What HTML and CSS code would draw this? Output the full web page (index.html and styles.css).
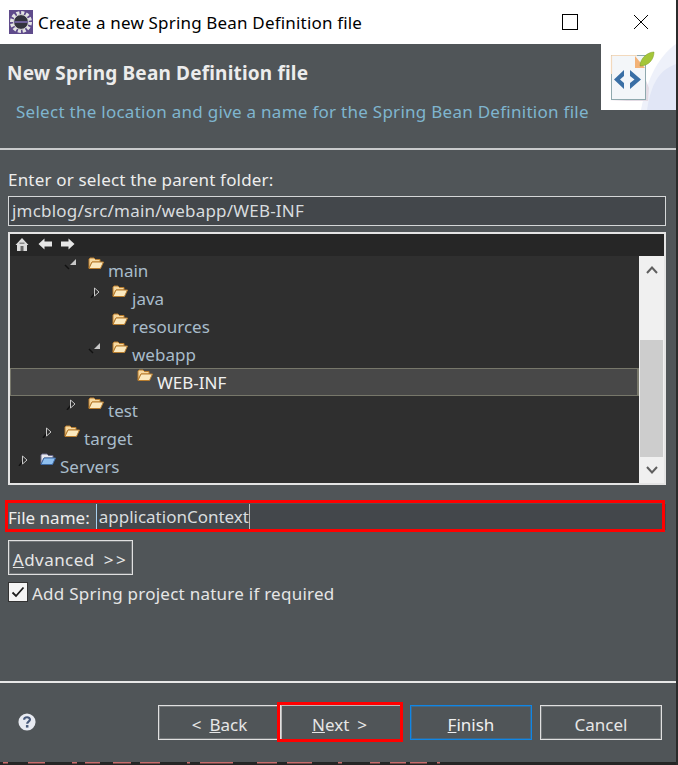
FILE: index.html
```html
<!DOCTYPE html>
<html lang="en">
<head>
    <meta charset="UTF-8">
    <title>Create a new Spring Bean Definition file</title>
    <link rel="stylesheet" href="styles.css">
</head>
<body>
<svg class="defs" width="0" height="0">
    <defs>
        <g id="open-folder">
            <path d="M1 11 V2 L2 1 H6 L7.500 2.500 H12 V5 H4 L1 11 Z" fill="#f7d9a0" stroke="#b87d2e"/>
            <path d="M1 11.500 L4 5 H15.500 L12.500 11.500 Z" fill="#fbe9bf" stroke="#b87d2e"/>
        </g>
        <g id="project-folder">
            <path d="M1 11 V2 L2 1 H7 L8.500 2.500 H13 V5 H4 L1 11 Z" fill="#e8e8ee" stroke="#6a6a8a"/>
            <path d="M1 11.500 L4 5 H15.500 L12.500 11.500 Z" fill="#8fc0f0" stroke="#3f6aa5"/>
        </g>
        <g id="twist-open">
            <path d="M1 9 L5 13" stroke="#111" stroke-width="1.500"/>
            <path d="M12 3 V9 H6 Z" fill="#c8c8c8"/>
        </g>
        <g id="twist-closed">
            <path d="M3 14 L7 9" stroke="#111" stroke-width="1.500"/>
            <path d="M6.500 4 L11 8 L6.500 12 Z" fill="#2c2c2c" stroke="#c8c8c8"/>
        </g>
    </defs>
</svg>
<div class="window">
    <div class="titlebar">
        <svg class="app-icon" width="24" height="24" viewBox="0 0 24 24">
            <rect width="24" height="24" fill="#5f4b8b"/>
            <circle cx="12" cy="12" r="9" fill="none" stroke="#e4e4e4" stroke-width="4" stroke-dasharray="3 1.7"/>
            <circle cx="12" cy="12" r="7.4" fill="#33333d" stroke="#d8d8d8"/>
            <rect x="5" y="11" width="14" height="2" fill="#6d5f97"/>
        </svg>
        <span class="title-text">Create a new Spring Bean Definition file</span>
        <div class="win-buttons">
            <svg width="16" height="16" viewBox="0 0 16 16"><rect x="0.500" y="0.500" width="15" height="15" fill="none" stroke="#000" stroke-width="1"/></svg>
            <svg width="16" height="16" viewBox="0 0 16 16"><path d="M1 1 L15 15 M15 1 L1 15" stroke="#000" stroke-width="1" fill="none"/></svg>
        </div>
    </div>

    <div class="banner">
        <div class="banner-text">
            <h1>New Spring Bean Definition file</h1>
            <p>Select the location and give a name for the Spring Bean Definition file</p>
        </div>
        <div class="banner-image">
            <svg width="75" height="66" viewBox="0 0 75 66">
                <path d="M40 66 C46 34 58 12 75 0 V66 Z" fill="#eef1fa"/>
                <path d="M46 66 C50 40 58 26 75 20 V66 Z" fill="#e1e6f6"/>
                <path d="M8 57 H47 L48 44 L44 34 V55 Z" fill="#e3dbe4"/>
                <rect x="10.500" y="11.500" width="34" height="44" fill="#f3f6f9" stroke="#8fa9ae"/>
                <path d="M10.500 11.500 H36 M10.500 11.500 V30" stroke="#f2d9bd" stroke-width="1.200" fill="none"/>
                <path d="M23 26 L13 35.500 L23 45 V39 L19 35.500 L23 32 Z" fill="#3a6fa5"/>
                <path d="M29 26 L40 35.500 L29 45 V39 L33.500 35.500 L29 32 Z" fill="#3a6fa5"/>
                <path d="M34 12 L44 24 L34 24 Z" fill="#f2b277"/>
                <path d="M39 22 C39 14 47 8 53 8 C53 15 48 22 39 22 Z" fill="#a4c639" stroke="#7c9b26" stroke-width="0.500"/>
            </svg>
        </div>
    </div>

    <div class="content">
        <label class="field-label">Enter or select the parent folder:</label>
        <div class="text-input">jmcblog/src/main/webapp/WEB-INF</div>

        <div class="tree-box">
            <div class="tree-toolbar">
                <svg width="14" height="15" viewBox="0 0 14 15"><path d="M7 1 L13.500 8 L12 8 V14 H2 V8 H0.500 Z" fill="#dcdcdc"/><rect x="5.500" y="9" width="3" height="5" fill="#666"/><rect x="4.500" y="5.500" width="5" height="1.500" fill="#888"/></svg>
                <svg width="14" height="12" viewBox="0 0 14 12"><path d="M0.500 6 L6.500 0.500 V3.500 H14 V8.500 H6.500 V11.500 Z" fill="#e6e6e6"/></svg>
                <svg width="14" height="12" viewBox="0 0 14 12"><path d="M13.500 6 L7.500 0.500 V3.500 H0 V8.500 H7.500 V11.500 Z" fill="#e6e6e6"/></svg>
            </div>
            <div class="tree-body">
                <ul class="tree">
                    <li class="row depth-3"><svg class="twist" width="14" height="14" viewBox="0 0 14 14"><use href="#twist-open"/></svg><svg class="folder" width="16" height="12" viewBox="0 0 16 12"><use href="#open-folder"/></svg><span>main</span></li>
                    <li class="row depth-4"><svg class="twist" width="14" height="14" viewBox="0 0 14 14"><use href="#twist-closed"/></svg><svg class="folder" width="16" height="12" viewBox="0 0 16 12"><use href="#open-folder"/></svg><span>java</span></li>
                    <li class="row depth-4 no-kids"><svg class="folder" width="16" height="12" viewBox="0 0 16 12"><use href="#open-folder"/></svg><span>resources</span></li>
                    <li class="row depth-4"><svg class="twist" width="14" height="14" viewBox="0 0 14 14"><use href="#twist-open"/></svg><svg class="folder" width="16" height="12" viewBox="0 0 16 12"><use href="#open-folder"/></svg><span>webapp</span></li>
                    <li class="row depth-5 no-kids selected"><svg class="folder" width="16" height="12" viewBox="0 0 16 12"><use href="#open-folder"/></svg><span>WEB-INF</span></li>
                    <li class="row depth-3"><svg class="twist" width="14" height="14" viewBox="0 0 14 14"><use href="#twist-closed"/></svg><svg class="folder" width="16" height="12" viewBox="0 0 16 12"><use href="#open-folder"/></svg><span>test</span></li>
                    <li class="row depth-2"><svg class="twist" width="14" height="14" viewBox="0 0 14 14"><use href="#twist-closed"/></svg><svg class="folder" width="16" height="12" viewBox="0 0 16 12"><use href="#open-folder"/></svg><span>target</span></li>
                    <li class="row depth-1"><svg class="twist" width="14" height="14" viewBox="0 0 14 14"><use href="#twist-closed"/></svg><svg class="folder" width="16" height="12" viewBox="0 0 16 12"><use href="#project-folder"/></svg><span>Servers</span></li>
                </ul>
                <div class="scrollbar">
                    <div class="arrow arrow-up"><svg width="12" height="10" viewBox="0 0 12 10"><path d="M1 8 L6 2.500 L11 8" fill="none" stroke="#5f5f5f" stroke-width="2"/></svg></div>
                    <div class="track"><div class="thumb"></div></div>
                    <div class="arrow arrow-down"><svg width="12" height="10" viewBox="0 0 12 10"><path d="M1 2 L6 7.500 L11 2" fill="none" stroke="#5f5f5f" stroke-width="2"/></svg></div>
                </div>
            </div>
        </div>

        <div class="file-row">
            <label>File name:</label>
            <div class="file-input">applicationContext<span class="caret"></span></div>
        </div>

        <button class="btn btn-advanced"><u>A</u>dvanced<span class="more">&gt;&gt;</span></button>

        <div class="check-row">
            <span class="checkbox"><svg width="16" height="16" viewBox="0 0 16 16"><path d="M2.500 8.500 L6 12 L13.500 3.500" fill="none" stroke="#1c1c1c" stroke-width="1.800"/></svg></span>
            <span class="check-label">Add Spring project nature if required</span>
        </div>
    </div>

    <div class="footer">
        <svg class="help" width="18" height="18" viewBox="0 0 20 20">
            <circle cx="10" cy="10" r="9.500" fill="#e8ebf2"/>
            <path d="M6.800 7.500 C6.800 3.800 13.300 3.800 13.300 7.300 C13.300 9.800 10.200 9.600 10.200 12" fill="none" stroke="#47597a" stroke-width="2.400"/>
            <rect x="8.800" y="13.400" width="2.800" height="2.800" fill="#47597a"/>
        </svg>
        <div class="footer-buttons">
            <button class="btn btn-back"><span class="lt">&lt;</span><u>B</u>ack</button>
            <button class="btn btn-next"><u>N</u>ext<span class="gt">&gt;</span></button>
            <button class="btn btn-finish"><u>F</u>inish</button>
            <button class="btn btn-cancel">Cancel</button>
        </div>
    </div>

    <!-- tops of the red text of the editor behind the dialog -->
    <svg class="behind" width="676" height="3" viewBox="0 0 676 3">
        <path d="M3 0 H8 M28 0 H45 M72 0 H77 M85 0 H100 M113 0 H131 M140 0 H160 M187 0 H190 M200 0 H233 M257 0 H277 M287 0 H312 M338 0 H342 M370 0 H380 M390 0 H406 M410 0 H427 M437 0 H440" stroke="#c96b6b" stroke-width="3"/>
    </svg>

    <div class="mark mark-file"></div>
    <div class="mark mark-next"></div>
</div>
</body>
</html>
```

FILE: styles.css
```css
*{
    margin: 0;
    padding: 0;
    box-sizing: border-box;
}
html,body{
    width: 678px;
    height: 765px;
    overflow: hidden;
}
body{
    background: #2b2b2b;
    font-family: "Noto Sans", "Noto Sans CJK KR", sans-serif;
    font-size: 17px;
    color: #e6e6e6;
}
.window{
    width: 676px;
    height: 765px;
    position: relative;
    display: flex;
    flex-direction: column;
    background: #505558;
}
.defs{
    position: absolute;
}

/* title bar */
.titlebar{
    height: 44px;
    flex: none;
    background: #fff;
    display: flex;
    align-items: center;
    padding-left: 9px;
    color: #000;
}
.app-icon{
    flex: none;
}
.title-text{
    margin-left: 5px;
    font-size: 17px;
    letter-spacing: 0.18px;
    white-space: nowrap;
}
.win-buttons{
    margin-left: auto;
    display: flex;
    gap: 55px;
    padding-right: 27px;
    align-items: center;
}

/* banner */
.banner{
    height: 106px;
    flex: none;
    display: flex;
    justify-content: space-between;
    align-items: flex-start;
    border-bottom: 2px solid #c9cbcc;
}
.banner-text{
    padding: 16px 0 0 7px;
    white-space: nowrap;
}
.banner-text h1{
    font-size: 19px;
    line-height: 26px;
    font-weight: bold;
    letter-spacing: 0.18px;
    color: #ececec;
}
.banner-text p{
    margin: 14px 0 0 9px;
    font-size: 17px;
    line-height: 24px;
    letter-spacing: 0.27px;
    color: #7fb5cf;
}
.banner-image{
    width: 75px;
    height: 66px;
    background: #fff;
    flex: none;
}
.banner-image svg{
    display: block;
}

/* form */
.content{
    flex: 1;
    padding: 18px 10px 0 8px;
    display: flex;
    flex-direction: column;
}
.field-label{
    line-height: 24px;
    letter-spacing: 0.18px;
    color: #ededed;
}
.text-input{
    margin-top: 4px;
    height: 30px;
    border: 1px solid #d5d7d8;
    background: #43474b;
    line-height: 28px;
    padding-left: 3px;
    letter-spacing: 0.2px;
    color: #d8dcdf;
}
.tree-box{
    margin-top: 6px;
    height: 253px;
    border: 2px solid #e4e4e4;
    background: #2f2f2f;
    display: flex;
    flex-direction: column;
}
.tree-toolbar{
    height: 22px;
    flex: none;
    background: #262626;
    display: flex;
    align-items: center;
    gap: 9px;
    padding: 0 0 2px 5px;
}
.tree-body{
    flex: 1;
    display: flex;
    min-height: 0;
}
.tree{
    flex: 1;
    list-style: none;
}
.row{
    height: 28px;
    display: flex;
    align-items: center;
    color: #a8bccb;
    white-space: nowrap;
}
.row span{
    margin-left: 4px;
}
.row .folder{
    margin-top: -14px;
    flex: none;
}
.row .twist{
    margin: -14px 10px 0 0;
    flex: none;
}
.depth-1{
    padding-left: 6px;
}
.depth-2{
    padding-left: 30px;
}
.depth-3{
    padding-left: 54px;
}
.depth-4{
    padding-left: 78px;
}
.depth-4.no-kids{
    padding-left: 102px;
}
.depth-5.no-kids{
    padding-left: 126px;
}
.selected{
    background: #484848;
    border: 1px solid #77776a;
    border-right-width: 2px;
    color: #f0f0f0;
}
.scrollbar{
    width: 25px;
    flex: none;
    background: #f0f0f0;
    display: flex;
    flex-direction: column;
}
.arrow{
    flex: none;
    display: flex;
    align-items: center;
    justify-content: center;
}
.arrow-up{
    height: 28px;
}
.arrow-down{
    height: 26px;
}
.track{
    flex: 1;
    display: flex;
    flex-direction: column;
    justify-content: flex-end;
}
.thumb{
    height: 117px;
    margin: 0 1px;
    background: #cdcdcd;
}

/* file name row */
.file-row{
    margin-top: 17px;
    height: 30px;
    display: flex;
    align-items: center;
    color: #ededed;
}
.file-input{
    flex: 1;
    height: 26px;
    margin-left: 6px;
    background: #43474b;
    border-left: 1px solid #a9d0ef;
    padding-left: 2px;
    line-height: 26px;
    color: #d8dcdf;
    display: flex;
    align-items: center;
}
.caret{
    width: 1px;
    height: 26px;
    background: #bdbdbd;
}

/* buttons */
.btn{
    font: inherit;
    color: #e6e6e6;
    background: transparent;
    border: 1px solid #e0e0e0;
    box-shadow: inset 0 0 0 1px rgba(255, 255, 255, 0.2);
    white-space: nowrap;
    height: 35px;
    padding-top: 4px;
}
.btn-advanced{
    margin-top: 8px;
    width: 125px;
    align-self: flex-start;
    letter-spacing: 0.45px;
}
.more{
    margin-left: 9px;
    letter-spacing: 2.5px;
}
.check-row{
    margin-top: 7px;
    display: flex;
    align-items: flex-start;
    gap: 4px;
    color: #e6e6e6;
}
.check-label{
    line-height: 24px;
    letter-spacing: 0.25px;
}
.checkbox{
    width: 20px;
    height: 20px;
    background: #f4f4f4;
    border: 1px solid #333;
    display: flex;
    align-items: center;
    justify-content: center;
}

/* footer */
.footer{
    height: 81px;
    flex: none;
    border-top: 2px solid #e8e8e8;
    display: flex;
    align-items: flex-start;
    padding: 22px 14px 0 18px;
}
.help{
    margin-top: 8px;
    flex: none;
}
.footer-buttons{
    margin-left: auto;
    display: flex;
}
.btn-back{
    width: 123px;
}
.btn-next{
    width: 121px;
    padding-right: 4px;
    border-color: #b8b8b8;
    box-shadow: none;
}
.btn-finish{
    width: 122px;
    margin-left: 8px;
    border-color: #0f86e6;
    box-shadow: inset 0 0 0 1px rgba(30, 140, 230, 0.35);
    color: #f0f0f0;
}
.btn-cancel{
    width: 122px;
    margin-left: 8px;
}
.lt{
    margin-right: 8px;
}
.gt{
    margin-left: 8px;
}
.behind{
    flex: none;
    display: block;
    background: #252525;
}

/* red annotations drawn over the dialog */
.mark{
    position: absolute;
    border: 3px solid #f00;
    pointer-events: none;
}
.mark-file{
    left: 5px;
    top: 500px;
    width: 660px;
    height: 32px;
}
.mark-next{
    left: 277px;
    top: 702px;
    width: 126px;
    height: 40px;
}
```
